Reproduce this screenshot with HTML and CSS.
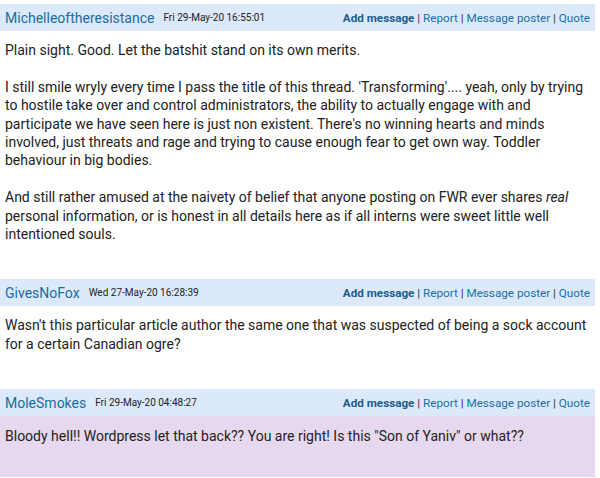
FILE: index.html
```html
<!DOCTYPE html>
<html lang="en">
<head>
    <meta charset="UTF-8">
    <title>Thread</title>
    <link rel="stylesheet" href="styles.css">
</head>
<body>
    <div class="thread">
        <div class="post">
            <div class="post-header">
                <span class="poster">Michelleoftheresistance</span>
                <span class="date">Fri 29-May-20 16:55:01</span>
                <span class="actions"><a class="add" href="#">Add message</a> | <a href="#">Report</a> | <a href="#">Message poster</a> | <a href="#">Quote</a></span>
            </div>
            <div class="post-body">
                <p>Plain sight. Good. Let the batshit stand on its own merits.</p>
                <p>I still smile wryly every time I pass the title of this thread. 'Transforming'.... yeah, only by trying to hostile take over and control administrators, the ability to actually engage with and participate we have seen here is just non existent. There's no winning hearts and minds involved, just threats and rage and trying to cause enough fear to get own way. Toddler behaviour in big bodies.</p>
                <p>And still rather amused at the naivety of belief that anyone posting on FWR ever shares <em>real</em> personal information, or is honest in all details here as if all interns were sweet little well intentioned souls.</p>
            </div>
        </div>

        <div class="post">
            <div class="post-header">
                <span class="poster">GivesNoFox</span>
                <span class="date">Wed 27-May-20 16:28:39</span>
                <span class="actions"><a class="add" href="#">Add message</a> | <a href="#">Report</a> | <a href="#">Message poster</a> | <a href="#">Quote</a></span>
            </div>
            <div class="post-body">
                <p>Wasn't this particular article author the same one that was suspected of being a sock account for a certain Canadian ogre?</p>
            </div>
        </div>

        <div class="post">
            <div class="post-header">
                <span class="poster">MoleSmokes</span>
                <span class="date">Fri 29-May-20 04:48:27</span>
                <span class="actions"><a class="add" href="#">Add message</a> | <a href="#">Report</a> | <a href="#">Message poster</a> | <a href="#">Quote</a></span>
            </div>
            <div class="post-body post-own">
                <p>Bloody hell!! Wordpress let that back?? You are right! Is this "Son of Yaniv" or what??</p>
            </div>
        </div>
    </div>
</body>
</html>
```

FILE: styles.css
```css
/* Thread view */
body {
    margin: 0;
    padding: 4px 5px 0 0;
    background-color: #ffffff;
    font-family: Roboto, "Noto Sans", sans-serif;
    color: #222222;
}

.post {
    margin-bottom: 8px;
}

.post-header {
    display: flex;
    align-items: center;
    height: 27px;
    padding: 0 5px;
    background-color: #dbe9fb;
    white-space: nowrap;
}

.poster {
    font-size: 14px;
    color: #1b6ca2;
}

.date {
    margin-left: 9px;
    font-size: 10px;
    color: #222222;
}

.actions {
    margin-left: auto;
    font-size: 11.7px;
    color: #333333;
}

.actions a {
    color: #1e6fa5;
    text-decoration: none;
}

.actions a.add {
    font-weight: bold;
    color: #1d5d8c;
}

.post-body {
    padding: 10px 0 28px 5px;
    font-size: 14px;
    line-height: 18.4px;
}

.post-body p {
    margin: 0 0 18.4px 0;
}

.post-body p:last-child {
    margin-bottom: 0;
}

.post-own {
    padding-top: 11px;
    padding-bottom: 31px;
    background-color: #e6d9ef;
}
```
